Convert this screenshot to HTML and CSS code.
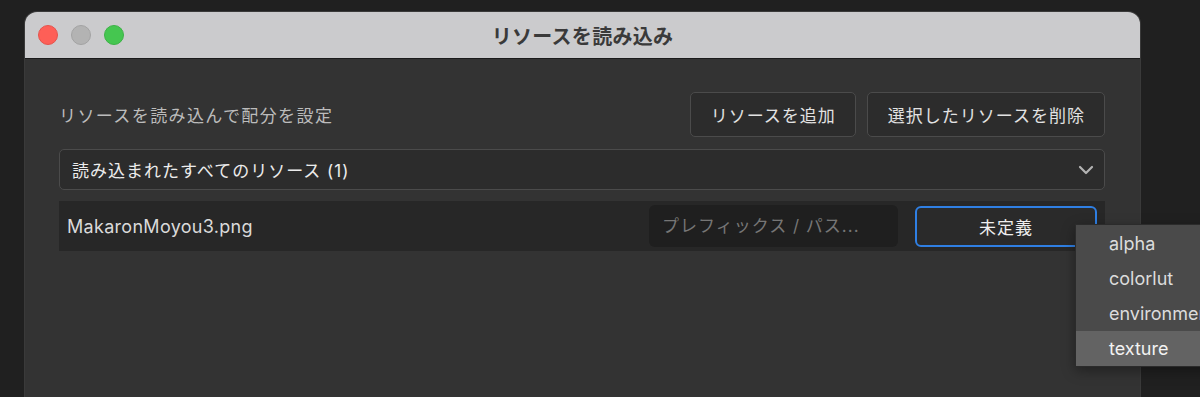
FILE: index.html
```html
<!DOCTYPE html>
<html lang="ja">
  <head>
    <meta charset="utf-8">
    <title>リソースを読み込み</title>
    <link rel="stylesheet" href="styles.css">
  </head>
  <body>
    <div class="window">
      <div class="titlebar">
        <div class="lights">
          <span class="light close"></span>
          <span class="light minimize"></span>
          <span class="light zoom"></span>
        </div>
        <div class="title">リソースを読み込み</div>
        <div></div>
      </div>

      <div class="content">
        <div class="toolbar">
          <span class="hint">リソースを読み込んで配分を設定</span>
          <div class="actions">
            <button class="btn">リソースを追加</button>
            <button class="btn">選択したリソースを削除</button>
          </div>
        </div>

        <div class="filter">
          <span>読み込まれたすべてのリソース (1)</span>
          <svg class="chevron" width="16" height="10" viewBox="0 0 16 10">
            <polyline points="2,2 8,8 14,2" fill="none" stroke="#b3b3b3" stroke-width="2.2" stroke-linecap="round" stroke-linejoin="round"/>
          </svg>
        </div>

        <div class="resource-row">
          <span class="file-name">MakaronMoyou3.png</span>
          <input class="prefix" type="text" placeholder="プレフィックス / パス...">
          <div class="type-select">
            <button class="type-btn">未定義</button>
            <!-- open popup menu -->
            <ul class="type-menu">
              <li>alpha</li>
              <li>colorlut</li>
              <li>environment</li>
              <li class="active">texture</li>
            </ul>
          </div>
        </div>
      </div>
    </div>
  </body>
</html>
```

FILE: styles.css
```css
html,
body {
  margin: 0;
  height: 100%;
  overflow: hidden;
}
body {
  background: #202020;
  font-family: Inter, "Noto Sans CJK JP", sans-serif;
  padding: 12px 0 0 25px;
  box-sizing: border-box;
}
.window {
  width: 1115px;
  height: 385px;
  border-radius: 12px 12px 0 0;
  background: #333333;
  box-shadow: 0 0 0 1px #3a3a3a;
}
.titlebar {
  height: 46px;
  display: grid;
  grid-template-columns: 1fr auto 1fr;
  align-items: center;
  background: #cbcbcd;
  border-radius: 12px 12px 0 0;
  border-bottom: 1px solid #1b1b1b;
}
.lights {
  display: flex;
  gap: 13px;
  padding-left: 13px;
}
.light {
  width: 20px;
  height: 20px;
  border-radius: 50%;
  box-sizing: border-box;
}
.light.close {
  background: #fe5f57;
  border: 1px solid #e5534c;
}
.light.minimize {
  background: #b3b3b3;
  border: 1px solid #a3a3a3;
}
.light.zoom {
  background: #45c650;
  border: 1px solid #3cb246;
}
.title {
  font-size: 20px;
  font-weight: 700;
  color: #3a3a3a;
  letter-spacing: 0.3px;
}
.content {
  padding: 33px 35px 0 34px;
}
.toolbar {
  display: flex;
  justify-content: space-between;
  align-items: center;
}
.hint {
  font-size: 17px;
  letter-spacing: 1.4px;
  color: #bcbcbc;
}
.actions {
  display: flex;
  gap: 11px;
}
.btn {
  height: 45px;
  padding: 0 19px 0 20px;
  background: #2c2c2c;
  border: 1px solid #4b4b4b;
  border-radius: 5px;
  color: #e2e2e2;
  font-family: inherit;
  font-size: 17px;
  letter-spacing: 1px;
}
.filter {
  margin-top: 12px;
  height: 41px;
  box-sizing: border-box;
  display: flex;
  align-items: center;
  justify-content: space-between;
  padding: 0 10px 0 12px;
  background: #2c2c2c;
  border: 1px solid #4b4b4b;
  border-radius: 5px;
  color: #ececec;
  font-size: 17px;
  letter-spacing: 1px;
}
.resource-row {
  margin-top: 11px;
  height: 50px;
  display: flex;
  align-items: center;
  gap: 17px;
  padding: 0 8px;
  background: #272727;
}
.file-name {
  flex: 1;
  font-size: 18px;
  letter-spacing: 0.3px;
  color: #dadada;
}
.prefix {
  width: 249px;
  height: 42px;
  box-sizing: border-box;
  padding: 0 13px;
  background: #1f1f1f;
  border: none;
  border-radius: 6px;
  color: #dddddd;
  font-family: inherit;
  font-size: 17px;
  letter-spacing: 1px;
  outline: none;
}
.prefix::placeholder {
  color: #767676;
}
.type-select {
  position: relative;
}
.type-btn {
  width: 182px;
  height: 41px;
  background: #2a2a2a;
  border: 2px solid #2f7fe3;
  border-radius: 6px;
  color: #eeeeee;
  font-family: inherit;
  font-size: 17px;
  letter-spacing: 1px;
}
.type-menu {
  position: absolute;
  left: 160px;
  top: 18px;
  width: 180px;
  margin: 0;
  padding: 1px 0 0;
  list-style: none;
  background: #4a4a4a;
  border: 1px solid #2b2b2b;
  box-shadow: 0 4px 12px rgba(0, 0, 0, 0.35);
}
.type-menu li {
  height: 35px;
  line-height: 35px;
  padding-left: 33px;
  font-size: 18px;
  color: #dcdcdc;
  white-space: nowrap;
}
.type-menu li.active {
  background: #636363;
  color: #f2f2f2;
}
```
